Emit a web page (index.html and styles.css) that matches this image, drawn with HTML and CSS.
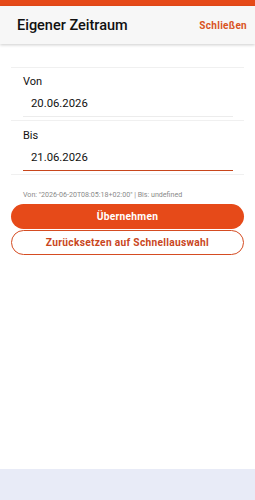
FILE: index.html
```html
<!DOCTYPE html>
<html lang="de">
<head>
    <meta charset="UTF-8">
    <meta name="viewport" content="width=device-width, initial-scale=1.0">
    <title>Eigener Zeitraum</title>
    <link rel="stylesheet" href="styles.css">
</head>
<body>
    <div class="topbar"></div>
    <div class="header">
        <h1>Eigener Zeitraum</h1>
        <button class="close-btn">Schließen</button>
    </div>

    <div class="content">
        <div class="list">
            <div class="item">
                <label for="von">Von</label>
                <input type="text" id="von" value="20.06.2026">
            </div>
            <div class="item">
                <label for="bis">Bis</label>
                <input type="text" id="bis" class="focused" value="21.06.2026">
            </div>
        </div>

        <div class="debug">Von: "2026-06-20T08:05:18+02:00" | Bis: undefined</div>

        <button class="btn btn-primary">Übernehmen</button>
        <button class="btn btn-outline">Zurücksetzen auf Schnellauswahl</button>
    </div>

    <div class="footer"></div>
</body>
</html>
```

FILE: styles.css
```css
body {
    font-family: Roboto, 'Noto Sans', sans-serif;
    background-color: #fff;
    margin: 0;
    padding: 0;
    height: 500px;
    position: relative;
    color: #1a1a1a;
}

.topbar {
    height: 6px;
    background-color: #e64a19;
}

.header {
    height: 38px;
    background-color: #f7f7f7;
    box-shadow: 0 1px 3px rgba(0, 0, 0, 0.2);
    display: flex;
    align-items: center;
    justify-content: space-between;
    padding: 0 8px 0 17px;
}

.header h1 {
    margin: 0;
    font-size: 14.5px;
    font-weight: 500;
    color: #111;
}

.close-btn {
    background: none;
    border: none;
    padding: 0;
    font-family: inherit;
    font-size: 10px;
    font-weight: 700;
    color: #d9531e;
    letter-spacing: 0.3px;
}

.content {
    padding: 0 11px;
}

.list {
    margin-top: 23px;
    border-top: 1px solid #f0f0f0;
}

.item {
    padding: 7px 11px 3px 12px;
    border-bottom: 1px solid #f0f0f0;
}

.item + .item {
    padding-top: 8px;
}

.item label {
    display: block;
    font-size: 11px;
    line-height: 14px;
    color: #111;
}

.item input {
    display: block;
    width: 100%;
    box-sizing: border-box;
    height: 28px;
    border: none;
    border-bottom: 1px solid #ececec;
    padding: 2px 0 0 8px;
    font-family: inherit;
    font-size: 11.3px;
    color: #111;
    outline: none;
    background: none;
}

.item input.focused {
    border-bottom: 1.5px solid #c8461c;
}

.debug {
    margin: 15px 0 0 12px;
    font-size: 7.1px;
    color: #8a8a8a;
    line-height: 10px;
}

.btn {
    display: block;
    width: 100%;
    height: 25px;
    border-radius: 13px;
    font-family: inherit;
    font-size: 10.2px;
    font-weight: 700;
    letter-spacing: 0.3px;
    box-sizing: border-box;
}

.btn-primary {
    margin-top: 4px;
    background-color: #e64a19;
    border: none;
    color: #fff;
}

.btn-outline {
    margin-top: 1px;
    background-color: #fff;
    border: 1.5px solid #d54c22;
    color: #c9461d;
}

.footer {
    position: absolute;
    left: 0;
    right: 0;
    bottom: 0;
    height: 31px;
    background-color: #e8ebf7;
}
```
